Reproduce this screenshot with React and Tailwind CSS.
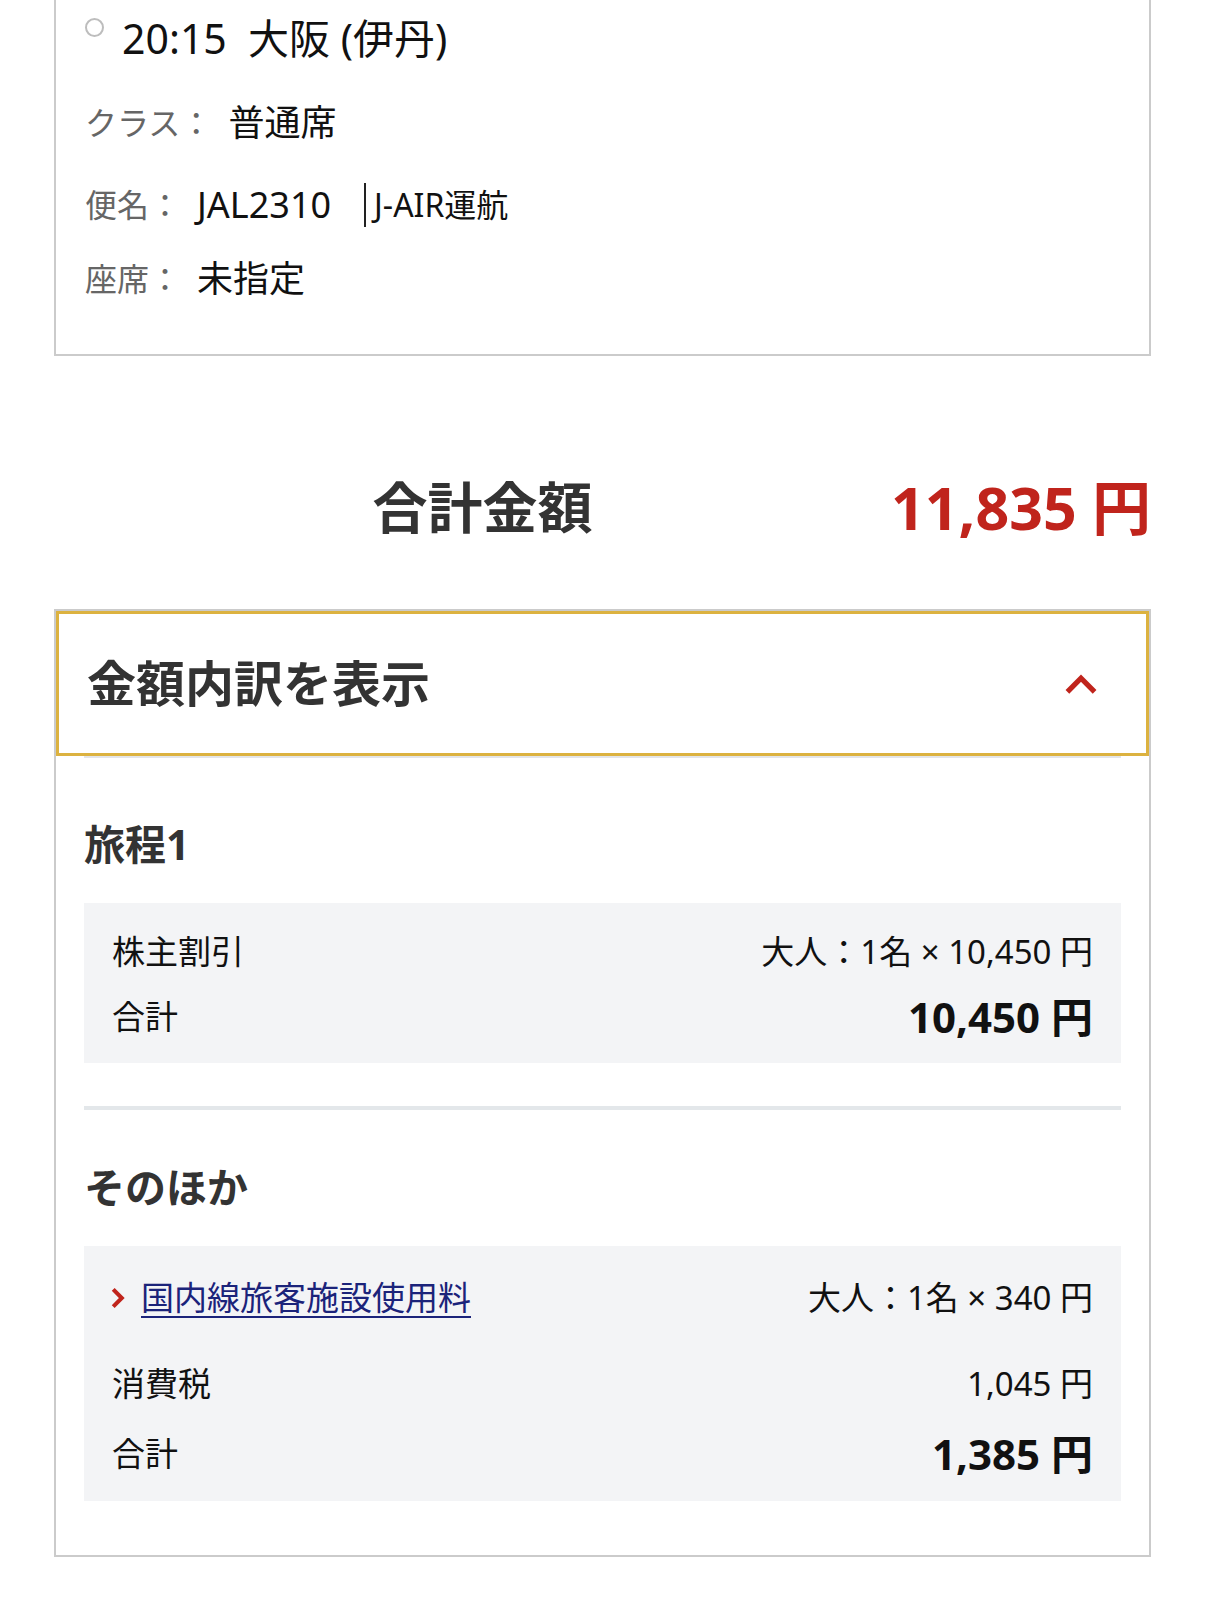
const font = { fontFamily: '"Noto Sans", "Noto Sans CJK JP", sans-serif' };

function Chevron({ up, className }) {
  return up ? (
    <svg viewBox="0 0 32 22" className={className} fill="none">
      <polyline points="3,19 16,6 29,19" stroke="#c0241c" strokeWidth="5" />
    </svg>
  ) : (
    <svg viewBox="0 0 14 20" className={className} fill="none">
      <polyline points="3,2 11,10 3,18" stroke="#c0241c" strokeWidth="3.8" />
    </svg>
  );
}

function InfoRow({ label, children, className }) {
  return (
    <div className={`flex items-center h-[57px] ${className}`}>
      <span className="text-[32px] text-[#666]">{label}</span>
      <span className="ml-4 text-[36px] text-[#111] flex items-center">{children}</span>
    </div>
  );
}

export default function App() {
  return (
    <div style={font} className="w-full bg-white pb-[40px]">
      {/* flight details card (top edge is cut off) */}
      <div className="ml-[54px] w-[1097px] border-x-2 border-b-2 border-[#cbcbcb] pl-[29px] pb-[47px]">
        <div className="flex items-center h-[78px]">
          <span className="w-[19px] h-[19px] rounded-full border-2 border-[#bdbdbd] self-start mt-[18px]" />
          <span className="ml-[18px] text-[41px] text-[#111] whitespace-pre">20:15  大阪 (伊丹)</span>
        </div>
        <InfoRow label="クラス：" className="mt-[16px]">普通席</InfoRow>
        <InfoRow label="便名：" className="mt-[25px]">
          JAL2310
          <span className="ml-[33px] border-l-2 border-[#222] pl-2 text-[32px] leading-[44px]">J-AIR運航</span>
        </InfoRow>
        <InfoRow label="座席：" className="mt-[17px]">未指定</InfoRow>
      </div>

      {/* total */}
      <div className="ml-[54px] w-[1097px] mt-[100px] h-[102px] flex items-center">
        <div className="flex-1 text-center pl-5 text-[55px] font-bold text-[#333]">合計金額</div>
        <div className="text-[59px] font-bold text-[#c0241c] whitespace-nowrap">11,835 円</div>
      </div>

      {/* breakdown accordion */}
      <div className="ml-[54px] w-[1097px] mt-[51px] border-2 border-[#cbcbcb] pb-[54px]">
        <div className="flex items-center justify-between h-[145px] border-[3px] border-[#dcb240] pl-[28px] pr-[48px]">
          <span className="text-[49px] font-bold text-[#333]">金額内訳を表示</span>
          <Chevron up className="w-[34px] h-[23px]" />
        </div>
        <div className="mx-[28px] border-t-2 border-[#e3e5e8]">
          <h3 className="mt-[58px] h-[57px] flex items-center text-[41px] font-bold text-[#333]">旅程1</h3>
          <div className="mt-[30px] bg-gray-100 px-[28px] pt-[26px] pb-[18px]">
            <div className="flex items-center justify-between h-[45px] text-[33px] text-[#111]">
              <span>株主割引</span>
              <span>大人：1名 × 10,450 円</span>
            </div>
            <div className="flex items-center justify-between h-[57px] mt-[14px] text-[#111]">
              <span className="text-[33px]">合計</span>
              <span className="text-[42px] font-bold">10,450 円</span>
            </div>
          </div>

          <div className="mt-[43px] h-[4px] bg-[#e3e7ea]" />

          <h3 className="mt-[49px] h-[57px] flex items-center text-[41px] font-bold text-[#333]">そのほか</h3>
          <div className="mt-[30px] bg-gray-100 px-[26px] pt-[27px] pb-[19px]">
            <div className="flex items-center justify-between h-[49px] text-[33px] text-[#111]">
              <a href="#" className="flex items-center gap-[16px] text-[#1b237a]">
                <Chevron className="w-[15px] h-[22px]" />
                <span className="underline underline-offset-[6px] decoration-2">国内線旅客施設使用料</span>
              </a>
              <span className="mr-[2px]">大人：1名 × 340 円</span>
            </div>
            <div className="flex items-center justify-between h-[45px] mt-[39px] pl-[2px] pr-[2px] text-[33px] text-[#111]">
              <span>消費税</span>
              <span>1,045 円</span>
            </div>
            <div className="flex items-center justify-between h-[57px] mt-[19px] pl-[2px] pr-[2px] text-[#111]">
              <span className="text-[33px]">合計</span>
              <span className="text-[42px] font-bold">1,385 円</span>
            </div>
          </div>
        </div>
      </div>
    </div>
  );
}
